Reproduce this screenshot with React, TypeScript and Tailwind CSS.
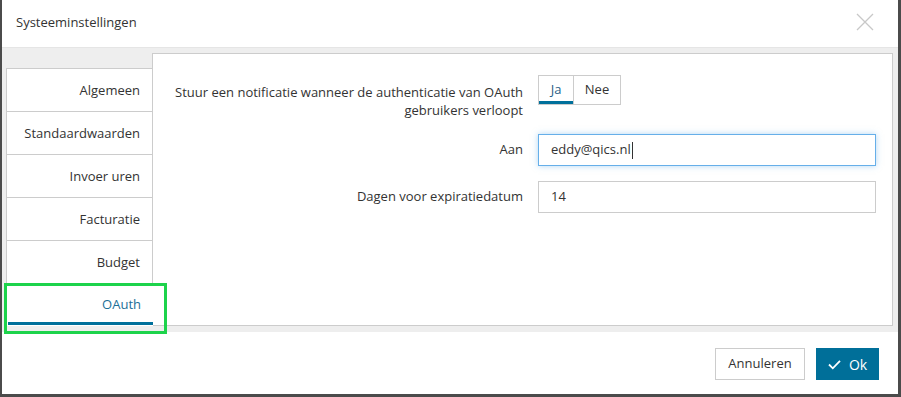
import React from 'react';

const tabs = ['Algemeen', 'Standaardwaarden', 'Invoer uren', 'Facturatie', 'Budget', 'OAuth'];

function CloseIcon() {
    return (
        <svg width="18" height="18" viewBox="0 0 18 18" className="text-[#c8c8c8]">
            <path d="M1 1 L17 17 M17 1 L1 17" stroke="currentColor" strokeWidth="1.3" fill="none" />
        </svg>
    );
}

function CheckIcon() {
    return (
        <svg width="13" height="11" viewBox="0 0 13 11">
            <path d="M1 5.5 L4.8 9.3 L12 1.8" stroke="white" strokeWidth="1.8" fill="none" />
        </svg>
    );
}

export default function App() {
    const active = 'OAuth';
    return (
        <div className="relative w-[901px] h-[397px] bg-[#4b4b4b] pl-[2px] pr-[3px] pb-[3px] font-['Open_Sans',sans-serif] text-[13px] text-[#333]">
            <div className="flex flex-col w-full h-full bg-white">
                {/* header */}
                <div className="flex items-center justify-between h-[48px] shrink-0 border-b border-[#e5e5e5] pl-[14px] pr-[24px]">
                    <span className="-mt-[2px]">Systeeminstellingen</span>
                    <span className="-mt-[4px]"><CloseIcon /></span>
                </div>

                {/* body */}
                <div className="flex h-[284px] shrink-0 bg-[#eeeeee] pl-[4px] pr-[5px] pt-[5px] pb-[6px]">
                    <div className="flex flex-col w-[147px] mt-[15px] -mr-px z-10">
                        {tabs.map((t) => {
                            const isActive = t === active;
                            return isActive ? (
                                <div key={t} className="h-[43px] bg-white border-l border-[#ccc] flex items-center justify-end pr-[12px] pt-[1px] text-[#1d6f97] relative">
                                    {t}
                                    <div className="absolute left-[1px] right-0 bottom-[1px] h-[3px] bg-[#00709b]" />
                                </div>
                            ) : (
                                <div key={t} className="h-[43px] bg-white border-l border-r border-t border-[#ccc] flex items-center justify-end pr-[12px] pt-[1px]">
                                    {t}
                                </div>
                            );
                        })}
                    </div>
                    <div className="flex-1 bg-white border border-[#ccc] pt-[21px] pr-[16px]">
                        <div className="flex">
                            <div className="w-[385px] shrink-0 text-right pr-[15px] pt-[8px] leading-[18px]">
                                Stuur een notificatie wanneer de authenticatie van OAuth<br />gebruikers verloopt
                            </div>
                            <div className="flex h-[30px] border border-[#ccc]">
                                <div className="relative w-[35px] flex items-center justify-center text-[#2a5f86] border-r border-[#ccc]">
                                    Ja
                                    <div className="absolute left-0 right-0 bottom-0 h-[3px] bg-[#00709b]" />
                                </div>
                                <div className="w-[46px] flex items-center justify-center">Nee</div>
                            </div>
                        </div>
                        <div className="flex items-center mt-[15px]">
                            <div className="w-[385px] shrink-0 text-right pr-[15px]">Aan</div>
                            <div className="flex-1 h-[32px] border border-[#66afe9] shadow-[0_0_6px_rgba(102,175,233,0.5)] flex items-center pl-[12px]">
                                eddy@qics.nl<span className="inline-block w-px h-[17px] bg-[#333] ml-px" />
                            </div>
                        </div>
                        <div className="flex items-center mt-[15px]">
                            <div className="w-[385px] shrink-0 text-right pr-[15px]">Dagen voor expiratiedatum</div>
                            <div className="flex-1 h-[32px] border border-[#ccc] flex items-center pl-[12px]">14</div>
                        </div>
                    </div>
                </div>

                {/* footer */}
                <div className="flex-1 flex items-start justify-end gap-[11px] pt-[16px] pr-[19px]">
                    <button className="h-[32px] w-[90px] border border-[#ccc] bg-white text-[#333]">Annuleren</button>
                    <button className="h-[32px] w-[63px] bg-[#006f99] text-white flex items-center justify-center gap-[8px] text-[14px]">
                        <CheckIcon />Ok
                    </button>
                </div>
            </div>

            {/* annotation highlight */}
            <div className="absolute left-[4px] top-[283px] w-[163px] h-[51px] border-[3px] border-[#1dd34b] pointer-events-none z-20" />
        </div>
    );
}
